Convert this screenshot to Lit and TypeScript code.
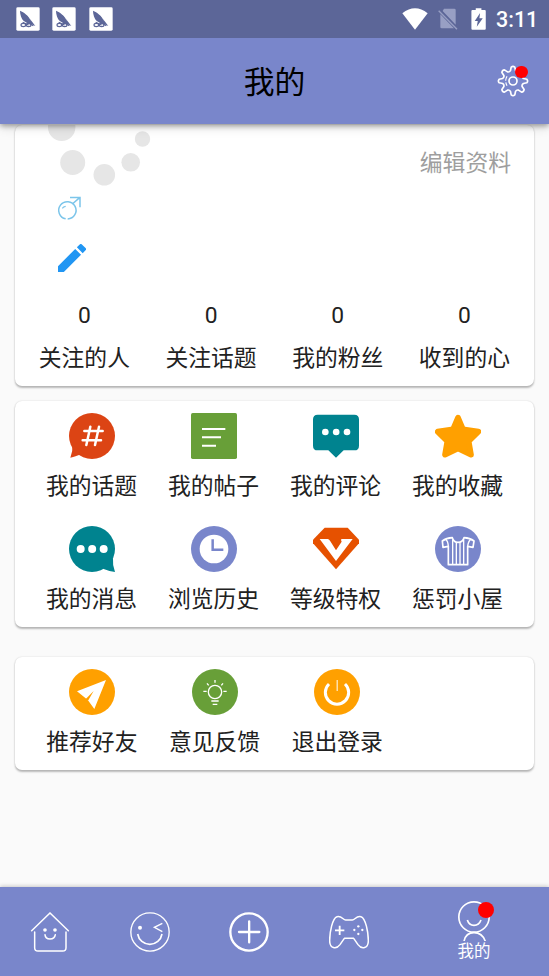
import { LitElement, html, css, svg } from "lit";
import { customElement, property } from "lit/decorators.js";

const gearPath = (() => {
  const pts: string[] = [];
  const n = 8;
  const at = (r: number, a: number) =>
    `${(48 + r * Math.sin(a)).toFixed(1)} ${(48 + r * Math.cos(a)).toFixed(1)}`;
  for (let i = 0; i < n; i++) {
    const a = (i * 2 * Math.PI) / n;
    pts.push(
      `${i ? "L" : "M"}${at(32, a - 0.24)}L${at(42, a - 0.13)}Q${at(46, a)} ${at(42, a + 0.13)}L${at(32, a + 0.24)}Q${at(28, a + 0.39)} ${at(32, a + 0.545)}`
    );
  }
  return pts.join("") + "Z";
})();

const icons: Record<string, { box: string; art: unknown }> = {
  gear: {
    box: "0 0 96 96",
    art: svg`<g fill="none" stroke="#fff" stroke-width="5" stroke-linejoin="round"><path d=${gearPath}/><circle cx="48" cy="48" r="12"/><path d="M30 34Q22 48 30 62" stroke-width="3.5" stroke-dasharray="14 5"/></g>`,
  },
  notice: {
    box: "0 0 72 72",
    art: svg`<rect x="1" y="1" width="70" height="70" rx="4" fill="#fff"/><path d="M12 11C24 16 38 27 42 36L58 57L46 52L36 49Q31 44 24 43C16 35 12 22 12 11Z" fill="#5c6698"/><g fill="none" stroke="#5c6698" stroke-width="3.5"><ellipse cx="22" cy="54" rx="7" ry="5"/><ellipse cx="38" cy="54" rx="7" ry="5"/><path d="M20 46l18 8M28 43l24 13"/></g><path d="M30 18l14 18M36 24l9 17" stroke="#fff" stroke-width="1.6" stroke-dasharray="2 2"/>`,
  },
  wifi: { box: "0 0 78 66", art: svg`<path d="M39 65L1 16Q39-14 77 16Z" fill="#fff"/>` },
  sim: {
    box: "0 0 60 66",
    art: svg`<path d="M18 2H49Q53 2 53 6V50L14 9ZM7 19L48 61H11Q7 61 7 57Z" fill="#989fc4"/><path d="M2 8L57 64" stroke="#989fc4" stroke-width="4"/>`,
  },
  battery: {
    box: "0 0 46 66",
    art: svg`<path d="M14 1H31V6H41Q44 6 44 9V62Q44 65 41 65H4Q1 65 1 62V9Q1 6 4 6H14Z" fill="#fff"/><path d="M27 15L11 39H20L17 56L35 31H25Z" fill="#5c6698"/>`,
  },
  male: {
    box: "0 0 78 78",
    art: svg`<g fill="none" stroke="#7cc5ea" stroke-width="4.5"><path d="M29 68.500A26 26 0 1 1 35 69M21 66L24 67.500"/><path d="M49 24L71 5M42 4.500H72V34"/><path d="M19 37Q22 32 29 31" stroke-width="3.500"/></g>`,
  },
  pencil: {
    box: "3 3 18 18",
    art: svg`<path fill="#2196f3" d="M3 17.250V21h3.750L17.810 9.940l-3.750-3.750L3 17.250zM20.710 7.040a1 1 0 0 0 0-1.410l-2.340-2.340a1 1 0 0 0-1.410 0l-1.830 1.830 3.750 3.750 1.830-1.830z"/>`,
  },
  topic: {
    box: "0 0 138 138",
    art: svg`<g fill="#dc4414"><circle cx="69" cy="69" r="69"/><path d="M10 96Q12 116 4 134Q18 131 30 126L46 120Z"/></g><path d="M46 54H101M41 82H96M64 41L52 96M90 41L78 96" stroke="#fff" stroke-width="7.500" stroke-linecap="round"/>`,
  },
  post: {
    box: "0 0 138 138",
    art: svg`<rect width="138" height="138" rx="5" fill="#689f38"/><path d="M33 48H103M33 72.500H90M33 98H75" stroke="#fff" stroke-width="6"/>`,
  },
  comment: {
    box: "0 0 138 138",
    art: svg`<path d="M14 5H124Q138 5 138 19V98Q138 112 124 112H92L69 134L46 112H14Q0 112 0 98V19Q0 5 14 5Z" fill="#00838f"/><g fill="#fff"><circle cx="37" cy="57" r="10"/><circle cx="69.500" cy="57" r="10"/><circle cx="102" cy="57" r="10"/></g>`,
  },
  star: {
    box: "0 0 138 138",
    art: svg`<path d="M69 14L84 49L130 56L101 85L108 125L69 106L30 125L37 85L8 56L54 49Z" fill="#ffa000" stroke="#ffa000" stroke-width="17" stroke-linejoin="round"/>`,
  },
  message: {
    box: "0 0 138 138",
    art: svg`<g fill="#00838f"><circle cx="69" cy="69" r="69"/><path d="M132 96Q130 116 138 138Q122 136 104 129L92 118Z"/></g><g fill="#fff"><circle cx="35" cy="69" r="12"/><circle cx="69.500" cy="69" r="12"/><circle cx="104" cy="69" r="12"/></g>`,
  },
  clock: {
    box: "0 0 138 138",
    art: svg`<circle cx="69" cy="69" r="69" fill="#7986cb"/><circle cx="69" cy="69" r="43" fill="#fff"/><path d="M65 40V71H97" fill="none" stroke="#7986cb" stroke-width="7.500"/>`,
  },
  level: {
    box: "0 0 138 138",
    art: svg`<path d="M35 5H104L138 41V52L69 130L0 52V41Z" fill="#e65100"/><path d="M20 39H44Q48 39 51 44L69 73L86 47Q83 43 85 39H119L69 105Z" fill="#fff"/>`,
  },
  shirt: {
    box: "0 0 138 138",
    art: svg`<circle cx="69" cy="69" r="69" fill="#7986cb"/><g fill="none" stroke="#fff" stroke-width="5" stroke-linejoin="round"><path d="M52 35Q34 36 22 45L24 64L40 61V116H98V61L114 64L117 45Q105 36 87 35Q83 49 69 49Q56 49 52 35Z"/><path d="M53 40V116M64 49V116M75 49V116M86 40V116M32 40Q39 45 40 61M107 40Q100 45 98 61" stroke-width="4"/></g>`,
  },
  send: {
    box: "0 0 138 138",
    art: svg`<circle cx="69" cy="69" r="69" fill="#ffa000"/><path d="M24 67L111 33L76 120L58 95L50 88Z" fill="#fff"/><path d="M46 94L54 86L74 66L58 94" fill="#ffa000"/>`,
  },
  bulb: {
    box: "0 0 138 138",
    art: svg`<circle cx="69" cy="69" r="69" fill="#689f38"/><g fill="none" stroke="#fff" stroke-width="4"><circle cx="69" cy="69" r="20"/><path d="M69 33V41M34 67H44M94 67H104M45 43L50 49M93 43L88 49M58 96H80M62 106H76"/></g>`,
  },
  power: {
    box: "0 0 138 138",
    art: svg`<circle cx="69" cy="69" r="69" fill="#ffa000"/><path d="M45 45A35 35 0 1 0 93 45" fill="none" stroke="#fff" stroke-width="9"/><path d="M69.500 33V66" stroke="#fff" stroke-width="3"/>`,
  },
  home: {
    box: "0 0 120 120",
    art: svg`<g fill="none" stroke="#fff" stroke-width="4.500" stroke-linecap="round"><path d="M5 56L60 3L115 56M14 60V107Q14 117 24 117H98Q108 117 108 107V60M45 68Q46 81 60 81T76 68"/></g><g fill="#fff"><circle cx="45" cy="54" r="5.500"/><circle cx="75" cy="54" r="5.500"/></g>`,
  },
  wink: {
    box: "0 0 120 120",
    art: svg`<g fill="none" stroke="#fff" stroke-width="4"><circle cx="60" cy="60" r="57.500"/><path d="M23 66A37 37 0 0 0 96 66" stroke-width="5"/><path d="M97 34L73 46L97 59"/></g><circle cx="30" cy="47" r="6" fill="#fff"/>`,
  },
  plus: {
    box: "0 0 120 120",
    art: svg`<g fill="none" stroke="#fff" stroke-width="7" stroke-linecap="round"><circle cx="60" cy="60" r="56"/><path d="M30 60H91M60.500 28V91"/></g>`,
  },
  game: {
    box: "0 0 120 120",
    art: svg`<g fill="none" stroke="#fff" stroke-width="4.500" stroke-linejoin="round"><path d="M24 14C10 18 2 62 2 86C2 110 22 113 33 98L46 79H74L87 98C98 113 118 110 118 86C118 62 110 18 96 14C82 10 78 24 70 24H50C42 24 38 10 24 14Z"/><path d="M18 55H46M32 41V69" stroke-width="5.500"/></g><g fill="#fff"><circle cx="88" cy="43" r="3.500"/><circle cx="76" cy="54" r="3.500"/><circle cx="100" cy="54" r="3.500"/><circle cx="88" cy="66" r="3.500"/></g>`,
  },
  me: {
    box: "0 0 120 120",
    art: svg`<g fill="none" stroke="#fff" stroke-width="5"><circle cx="60" cy="48" r="45.500"/><path d="M40 57Q45 73 60 73T81 57"/><path d="M30 121Q35 95 60 95T94 121"/></g>`,
  },
  loader: {
    box: "45 125 110 65",
    art: svg`<g fill="#e6e6e6"><circle cx="61.700" cy="127.300" r="13.700"/><circle cx="72.700" cy="162.500" r="12.500"/><circle cx="104.300" cy="174.800" r="10.800"/><circle cx="130.700" cy="162.300" r="9.300"/><circle cx="142.500" cy="139" r="7.700"/></g>`,
  },
};

@customElement("ui-icon")
export class UiIcon extends LitElement {
  static styles = css`
    :host { display: block; flex: none; }
    .art { display: block; width: 100%; height: 100%; }
  `;
  @property() name = "";
  render() {
    const i = icons[this.name];
    return html`<svg class="art" viewBox=${i.box}>${i.art}</svg>`;
  }
}

@customElement("app-root")
export class AppRoot extends LitElement {
  static styles = css`
    :host {
      display: flex; flex-direction: column; height: 976px; overflow: hidden;
      background: #fafafa; color: #212121;
      font-family: Roboto, "Noto Sans CJK SC", sans-serif; font-size: 22.8px;
    }
    .status {
      height: 38px; flex: none; background: #5c6698; color: #fff; position: relative; z-index: 2;
      display: flex; align-items: center; padding: 0 13px 0 15.500px; box-sizing: border-box;
    }
    .notices { display: flex; gap: 12.500px; flex: 1; }
    .notice { width: 24px; height: 24px; }
    .wifi { width: 26px; height: 22px; margin-right: 10px; }
    .sim { width: 20px; height: 22px; margin-right: 13px; }
    .battery { width: 15.500px; height: 22px; margin-right: 10px; }
    .time { font-weight: 500; font-size: 21.500px; line-height: 38px; width: 40px; white-space: nowrap; padding-top: 2px; }
    .bar {
      height: 86px; flex: none; background: #7986cb; position: relative; z-index: 1;
      box-shadow: 0 2px 5px rgba(0,0,0,.32), 0 4px 10px rgba(0,0,0,.12);
      display: grid; grid-template-columns: 1fr auto 1fr; align-items: center;
      padding: 0 20px; box-sizing: border-box;
    }
    .title { grid-column: 2; font-size: 30.800px; line-height: 40px; color: #000; font-weight: 400; margin: 3px 0 0; }
    .settings { justify-self: end; position: relative; width: 32px; height: 32px; }
    .settings-icon { width: 32px; height: 32px; }
    .dot { position: absolute; border-radius: 50%; background: #f00; }
    .settings .dot { width: 12.600px; height: 12.600px; left: 18px; top: .7px; }
    .content { flex: 1; min-height: 0; padding: 1px 15px 0; }
    .card {
      background: #fff; border-radius: 7px; overflow: hidden; box-sizing: border-box;
      box-shadow: 0 1.500px 2px rgba(0,0,0,.26), 0 0 2px rgba(0,0,0,.1);
    }
    .profile { height: 261px; }
    .head { display: flex; justify-content: space-between; padding: 0 23px 0 30px; }
    .loader { width: 110px; height: 65px; }
    .edit { color: #9e9e9e; line-height: 30px; margin-top: 24px; }
    .male { width: 26px; height: 26px; margin: 6px 0 0 41px; }
    .pencil { width: 28px; height: 28px; margin: 22px 0 0 43px; }
    .stats { display: grid; grid-template-columns: repeat(4, 126.700px); padding-left: 6px; margin-top: 29px; text-align: center; }
    .count { line-height: 30px; }
    .name { line-height: 30px; margin-top: 13px; white-space: nowrap; }
    .menu { height: 226px; margin-top: 15px; }
    .extra { height: 113px; margin-top: 30px; }
    .grid { display: grid; grid-template-columns: repeat(4, 122px); padding: 12px 0 0 15.500px; row-gap: 21px; }
    .extra .grid { grid-template-columns: repeat(4, 122.700px); }
    .cell { display: flex; flex-direction: column; align-items: center; height: 92px; }
    .cell-icon { width: 46px; height: 46px; }
    .cell-name { line-height: 30px; margin-top: 13px; white-space: nowrap; }
    .nav {
      height: 89px; flex: none; background: #7986cb; display: grid;
      grid-template-columns: repeat(4, 99.800px) 1fr; align-items: center; justify-items: center;
      box-shadow: 0 -1px 4px rgba(0,0,0,.2);
    }
    .tab { position: relative; display: flex; flex-direction: column; align-items: center; color: #fff; font-size: 16.500px; }
    .tab-icon { width: 40px; height: 40px; }
    .tab-name { line-height: 20px; margin-top: 1px; }
    .tab .dot { width: 16px; height: 16px; left: 24px; top: .7px; }
  `;

  private cell(icon: string, name: string) {
    return html`<div class="cell"><ui-icon class="cell-icon" name=${icon}></ui-icon><div class="cell-name">${name}</div></div>`;
  }

  render() {
    const stats = ["关注的人", "关注话题", "我的粉丝", "收到的心"];
    const menu = [
      ["topic", "我的话题"], ["post", "我的帖子"], ["comment", "我的评论"], ["star", "我的收藏"],
      ["message", "我的消息"], ["clock", "浏览历史"], ["level", "等级特权"], ["shirt", "惩罚小屋"],
    ];
    const extra = [["send", "推荐好友"], ["bulb", "意见反馈"], ["power", "退出登录"]];
    return html`
      <div class="status">
        <div class="notices">${[0, 1, 2].map(() => html`<ui-icon class="notice" name="notice"></ui-icon>`)}</div>
        <ui-icon class="wifi" name="wifi"></ui-icon>
        <ui-icon class="sim" name="sim"></ui-icon>
        <ui-icon class="battery" name="battery"></ui-icon>
        <div class="time">3:11</div>
      </div>
      <header class="bar">
        <h1 class="title">我的</h1>
        <div class="settings"><ui-icon class="settings-icon" name="gear"></ui-icon><span class="dot"></span></div>
      </header>
      <main class="content">
        <section class="card profile">
          <div class="head"><ui-icon class="loader" name="loader"></ui-icon><div class="edit">编辑资料</div></div>
          <ui-icon class="male" name="male"></ui-icon>
          <ui-icon class="pencil" name="pencil"></ui-icon>
          <div class="stats">
            ${stats.map((s) => html`<div><div class="count">0</div><div class="name">${s}</div></div>`)}
          </div>
        </section>
        <section class="card menu"><div class="grid">${menu.map(([i, n]) => this.cell(i, n))}</div></section>
        <section class="card extra"><div class="grid">${extra.map(([i, n]) => this.cell(i, n))}</div></section>
      </main>
      <nav class="nav">
        ${["home", "wink", "plus", "game"].map((n) => html`<div class="tab"><ui-icon class="tab-icon" name=${n}></ui-icon></div>`)}
        <div class="tab"><ui-icon class="tab-icon" name="me"></ui-icon><span class="dot"></span><div class="tab-name">我的</div></div>
      </nav>
    `;
  }
}
